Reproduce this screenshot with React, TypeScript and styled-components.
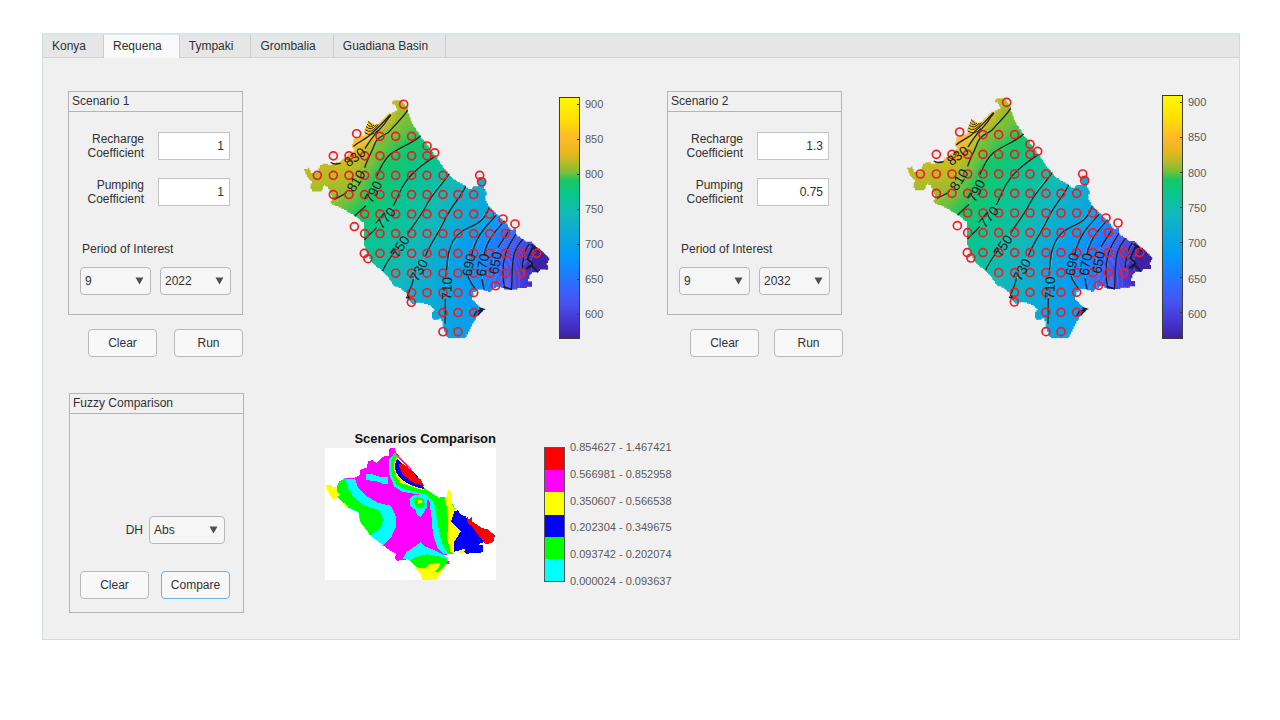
import React, { useId, useState } from "react";
import styled, { createGlobalStyle } from "styled-components";

type Point = [number, number];

/* ---------- colour scale ---------- */

const SCALE_TOP = 910;
const SCALE_BOTTOM = 565;

const ramp: [number, number, number, number][] = [
  [0, 255, 248, 0],
  [0.09, 255, 224, 0],
  [0.17, 255, 185, 42],
  [0.235, 228, 184, 28],
  [0.28, 172, 188, 40],
  [0.315, 112, 192, 60],
  [0.345, 22, 200, 100],
  [0.405, 8, 198, 142],
  [0.49, 18, 184, 188],
  [0.57, 10, 168, 220],
  [0.655, 6, 152, 248],
  [0.72, 20, 130, 255],
  [0.79, 53, 102, 255],
  [0.86, 70, 80, 240],
  [0.945, 69, 48, 200],
  [1, 62, 32, 160],
];

const colorAt = (level: number): string => {
  const t = Math.min(1, Math.max(0, (SCALE_TOP - level) / (SCALE_TOP - SCALE_BOTTOM)));
  let i = 1;
  while (i < ramp.length - 1 && ramp[i][0] < t) i += 1;
  const a = ramp[i - 1];
  const b = ramp[i];
  const k = (t - a[0]) / (b[0] - a[0]);
  const mix = (n: number) => Math.round(a[n] + (b[n] - a[n]) * k);
  return `rgb(${mix(1)},${mix(2)},${mix(3)})`;
};

/* ---------- raster helpers ---------- */

const parse = (text: string): Point[] =>
  text
    .trim()
    .split(/\s+/)
    .map((pair) => pair.split(",").map(Number) as Point);

const inside = (x: number, y: number, poly: Point[]): boolean => {
  let hit = false;
  for (let i = 0, j = poly.length - 1; i < poly.length; j = i, i += 1) {
    const [xi, yi] = poly[i];
    const [xj, yj] = poly[j];
    if (yi > y !== yj > y && x < ((xj - xi) * (y - yi)) / (yj - yi) + xi) hit = !hit;
  }
  return hit;
};

/* Path made of grid cells whose centre lies within the polygon. */
const cellPath = (poly: Point[], size: number): string => {
  const xs = poly.map((p) => p[0]);
  const ys = poly.map((p) => p[1]);
  const x0 = Math.floor(Math.min(...xs) / size) * size;
  const y0 = Math.floor(Math.min(...ys) / size) * size;
  const x1 = Math.max(...xs);
  const y1 = Math.max(...ys);
  let d = "";
  for (let y = y0; y < y1; y += size) {
    let start: number | null = null;
    for (let x = x0; x <= x1 + size; x += size) {
      const on = inside(x + size / 2, y + size / 2, poly);
      if (on && start === null) start = x;
      if (!on && start !== null) {
        d += `M${start} ${y}H${x}V${y + size}H${start}Z`;
        start = null;
      }
    }
  }
  return d;
};

/* ---------- head map data ---------- */

const basin = parse(`
302,52 302,43 315,38 330,40 347,50 348,75 352,88 360,108 372,128 386,150 398,165 412,182
428,205 440,222 452,240 468,260 480,275 492,283 505,292 520,297 522,303 535,310 545,302
560,300 557,283 563,270 577,272 581,290 577,305 583,320 581,340 592,362 608,378 622,392
636,405 650,422 662,434 668,426 674,432 673,448 690,458 705,468 722,470 740,488 755,500
774,518 764,534 769,553 745,553 737,562 725,558 712,572 708,587 720,590 720,605 690,607
660,613 635,610 620,603 600,612 592,621 586,615 560,612 545,622 540,640 552,655 565,668
574,675 560,690 548,706 538,725 528,745 520,762 470,762 462,750 455,735 452,710 445,700
430,706 418,696 420,683 427,675 415,660 400,655 380,650 360,657 350,640 343,622 325,608
305,600 292,580 272,556 255,545 240,530 228,510 218,480 218,440 215,410 190,390 165,375
140,362 115,352 122,335 113,318 108,300 95,297 90,314 65,318 55,305 60,285 45,270 37,250
50,245 60,262 78,257 85,237 100,230 115,236 140,228 165,210 190,190 180,180 186,155
205,150 222,144 235,140 250,117 270,100 290,82 305,76 315,70 312,56`);

/* Guide lines of equal level, each running from the lower left to the upper right. */
const isolines: { level: number; line: Point[] }[] = [
  { level: 875, line: parse("20,0 80,40 150,120 180,110 200,95 220,75 240,40 240,-20") },
  { level: 862, line: parse("20,60 80,120 165,165 195,148 222,134 248,108 268,72 270,-10") },
  { level: 846, line: parse("20,110 80,150 180,188 205,165 228,150 262,118 288,80 284,0") },
  { level: 826, line: parse("10,150 100,200 165,222 200,195 225,168 264,126 298,78 296,0") },
  { level: 806, line: parse("40,400 125,352 165,322 195,282 222,236 256,150 300,130 352,70") },
  { level: 791, line: parse("150,430 190,390 225,350 258,260 285,220 340,180 385,147 450,100") },
  { level: 772, line: parse("180,500 218,462 270,410 310,355 340,290 370,250 430,207 480,170") },
  { level: 754, line: parse("230,620 272,556 320,480 360,425 400,360 430,310 470,262 530,200") },
  { level: 732, line: parse("310,720 345,635 375,560 405,500 440,430 480,365 520,300 570,210") },
  { level: 710, line: parse("440,820 458,690 465,570 475,490 510,435 560,408 592,365 640,240") },
  { level: 690, line: parse("590,720 548,610 528,565 530,510 545,475 575,430 610,387 680,280") },
  { level: 670, line: parse("600,720 576,612 570,565 570,510 580,475 605,435 636,400 700,320") },
  { level: 650, line: parse("620,720 605,612 602,565 605,510 620,480 640,450 655,425 720,340") },
  { level: 630, line: parse("640,720 635,608 630,560 637,510 650,480 665,452 674,440 740,370") },
  { level: 610, line: parse("665,720 658,610 660,560 663,520 672,490 690,462 702,448 760,400") },
  { level: 595, line: parse("700,720 690,610 690,560 695,530 700,500 715,478 740,440 780,400") },
  { level: 568, line: parse("740,720 745,600 718,555 715,530 722,510 740,490 760,480 820,440") },
  { level: 560, line: parse("900,720 900,680 900,640 900,600 900,560 900,500 900,460 900,440") },
];

const STEPS = 8;

const bands = isolines.slice(0, -1).flatMap((low, i) => {
  const high = isolines[i + 1];
  const at = (k: number) =>
    low.line.map((p, n): Point => [
      p[0] + (high.line[n][0] - p[0]) * k,
      p[1] + (high.line[n][1] - p[1]) * k,
    ]);
  return Array.from({ length: STEPS }, (_, s) => {
    const edge = at(s / STEPS);
    const next = at(Math.min(1, (s + 1.3) / STEPS)).reverse();
    const level = low.level + ((high.level - low.level) * (s + 0.5)) / STEPS;
    return { fill: colorAt(level), points: [...edge, ...next].map((p) => p.join(",")).join(" ") };
  });
});

const contourLines = [
  "M184 180C202 163 226 157 240 139C258 124 276 104 295 83",
  "M219 186C232 166 240 152 252 140C262 128 276 116 286 98L297 84",
  "M116 228Q128 236 146 230",
  "M218 244C226 218 238 200 248 172C258 144 284 148 296 130C314 108 334 92 347 70",
  "M126 340C142 330 154 330 164 318",
  "M254 270C262 252 274 222 294 204C322 182 360 172 386 147",
  "M188 390L222 358",
  "M304 360C318 334 326 306 342 286C362 254 400 228 431 208",
  "M217 462C234 444 246 436 254 424",
  "M346 446C366 414 388 388 404 356C424 318 450 296 472 262",
  "M272 556C282 532 296 516 308 496",
  "M400 512C416 470 444 436 462 394C484 352 508 330 521 300",
  "M346 634C352 612 362 598 364 580",
  "M462 572C466 540 464 514 474 488C484 452 508 434 532 424C566 412 580 394 592 364",
  "M460 640L459 716",
  "M539 508C546 474 562 446 580 424L612 388",
  "M528 572C534 590 546 604 552 614",
  "M576 508C580 484 592 458 612 434L638 404",
  "M570 580L576 613",
  "M618 486C626 470 640 454 652 432",
  "M638 608C630 572 632 530 642 500C648 482 660 464 672 444",
  "M658 612C662 570 658 530 668 500C674 480 684 470 692 460",
  "M690 552C694 530 692 500 712 474",
];

const heavyLines = [
  "M716 476L748 502L724 488",
  "M722 484L706 520L722 534L702 550",
  "M706 548L720 540L738 560",
  "M346 620L352 640L342 636",
  "M545 694L552 680L574 672L562 668",
  "M556 690L572 674",
  "M634 604L660 612",
];

/* Closely spaced arcs around the local high on the north-west edge. */
const moundLines = [
  "M228 104L240 115",
  "M225 112Q235 124 246 115",
  "M222 120Q238 134 253 114",
  "M220 129Q238 144 259 113",
  "M218 138Q240 152 258 130",
];

const contourLabels: [string, number, number, number][] = [
  ["830", 188, 212, -36],
  ["810", 192, 284, -58],
  ["790", 244, 317, -62],
  ["770", 281, 396, -50],
  ["750", 324, 482, -56],
  ["730", 381, 554, -62],
  ["710", 465, 609, -88],
  ["690", 531, 538, -78],
  ["670", 572, 538, -80],
  ["650", 610, 532, -80],
];

const columns = [76, 124, 171, 218, 264, 311, 359, 405, 453, 498, 545, 593, 640, 687, 734];

const wellRows: [number, number, number][] = [
  [149, 4, 6],
  [208, 1, 7],
  [267, 0, 8],
  [325, 1, 10],
  [384, 3, 11],
  [443, 3, 12],
  [503, 4, 14],
  [563, 5, 13],
  [622, 6, 10],
  [682, 8, 10],
  [740, 8, 9],
];

const wells: Point[] = [
  ...wellRows.flatMap(([y, from, to]) => columns.slice(from, to + 1).map((x): Point => [x, y])),
  ...parse(`335,52 194,141 405,178 428,199 563,267 569,287 633,399 669,414 187,422 217,503
    228,519 611,601 358,651`),
];

const basinCells = cellPath(basin, 4);

/* ---------- comparison map data ---------- */

const comparisonAreas: [string, string][] = [
  ["#ff00ff", "222,76 226,69 238,68 243,82 258,100 275,118 300,145 325,185 345,205 370,218 388,222 392,260 405,300 418,385 385,390 340,400 262,404 248,408 240,402 243,385 225,376 205,362 165,330 155,315 135,290 130,262 92,244 80,222 66,215 66,185 72,170 90,160 120,158 134,150 135,135 155,128 160,108 172,106 185,114 205,95 222,92"],
  ["#00ffff", "86,160 120,162 128,185 150,210 190,234 228,242 243,275 243,305 228,338 205,362 165,330 155,315 135,290 130,262 92,244 80,222"],
  ["#00ff00", "66,185 72,170 92,160 97,185 115,217 150,243 190,255 204,282 196,308 165,332 155,315 135,290 133,262 92,244 68,215"],
  ["#ffff00", "33,180 45,178 56,188 66,184 66,200 74,208 66,218 54,224 44,208 34,190"],
  ["#ffff00", "80,230 90,236 100,246 90,246"],
  ["#00ffff", "154,148 170,147 192,155 220,156 220,178 204,178 190,170 154,165"],
  ["#00ffff", "240,82 222,105 223,150 238,185 262,200 320,210 343,228 350,280 354,330 368,370 388,388 418,388 420,250 405,225 370,218 325,188 243,88"],
  ["#00ff00", "238,84 228,108 230,150 246,182 270,193 336,210 357,232 366,280 374,330 384,362 402,388 418,388 420,250 405,225 388,216 370,218 325,188 243,88"],
  ["#ffff00", "244,94 236,118 240,150 256,174 296,187 328,197 325,186 300,145 250,100"],
  ["#0000ff", "246,100 240,118 242,140 258,162 286,180 328,193 320,170 300,145 252,108"],
  ["#ff0000", "250,116 266,118 290,136 306,158 318,164 326,182 304,177 284,166 262,146"],
  ["#ffff00", "397,214 398,197 404,192 410,210 408,230 420,256 410,290 436,318 418,350 418,388 406,380 396,340 400,290 394,240 388,222"],
  ["#0000ff", "418,258 430,256 436,268 452,274 470,300 500,330 510,350 490,358 505,362 505,382 455,386 440,374 418,380 418,350 438,318 408,290"],
  ["#ff0000", "454,268 462,284 470,276 472,290 500,308 520,314 540,332 534,352 512,358 494,336 474,308 458,294"],
  ["#00ffff", "283,222 292,212 318,210 335,220 336,246 326,262 318,276 306,270 302,256 286,244"],
  ["#00ff00", "294,222 306,216 326,222 330,240 318,250 304,246"],
  ["#ffff00", "308,226 320,226 320,234 308,236"],
  ["#00ffff", "262,402 276,380 300,364 316,352 330,364 350,372 386,390 398,400 396,412 300,412 284,404"],
  ["#00ff00", "286,406 306,394 336,388 372,394 396,402 398,412 372,430 320,432 302,424"],
  ["#ffff00", "300,430 330,430 344,418 376,412 372,428 390,424 376,446 364,464 322,466 316,444 304,436"],
  ["#00ff00", "360,440 394,408 396,416 368,444"],
  ["#ffff00", "430,384 442,372 454,374 438,386"],
  ["#ff00ff", "396,408 402,408 402,416 396,416"],
];

const comparisonCells = comparisonAreas.map(([fill, text]) => ({ fill, d: cellPath(parse(text), 3) }));

const comparisonClasses = [
  { color: "#ff0000", range: "0.854627 - 1.467421" },
  { color: "#ff00ff", range: "0.566981 - 0.852958" },
  { color: "#ffff00", range: "0.350607 - 0.566538" },
  { color: "#0000ff", range: "0.202304 - 0.349675" },
  { color: "#00ff00", range: "0.093742 - 0.202074" },
  { color: "#00ffff", range: "0.000024 - 0.093637" },
];

/* ---------- styles ---------- */

const GlobalStyle = createGlobalStyle`
  *, *::before, *::after { box-sizing: border-box; }
  body {
    margin: 0;
    background: #ffffff;
    color: #303030;
    font-family: "Liberation Sans", Arial, sans-serif;
    font-size: 12px;
    line-height: 14px;
  }
  button, input, select { font: inherit; color: inherit; }
`;

const Window = styled.main`
  margin: 33px 40px 80px 42px;
  min-width: 1190px;
  background: #f0f0f0;
  border: 1px solid #d4dada;
  border-top: 2px solid #d3e6ea;
`;

const TabBar = styled.div`
  display: flex;
  height: 23px;
  background: #e6e6e6;
  border-bottom: 1px solid #d2d2d2;
`;

const Tab = styled.button<{ $active: boolean }>`
  height: ${(p) => (p.$active ? 23 : 22)}px;
  padding: 0 17px ${(p) => (p.$active ? 1 : 0)}px 9px;
  border: 0;
  border-right: 1px solid #cccccc;
  background: ${(p) => (p.$active ? "#f9f9f9" : "transparent")};
`;

const Body = styled.div`
  padding: 33px 0 26px;
`;

const Scenarios = styled.div`
  display: grid;
  grid-template-columns: 1fr 1fr;
  gap: 2px;
`;

const ScenarioArea = styled.section`
  display: flex;
  align-items: flex-start;
  padding-left: 25px;
`;

const ControlColumn = styled.div`
  flex: none;
  width: 175px;
`;

const Panel = styled.fieldset`
  width: 175px;
  min-width: 0;
  margin: 0;
  padding: 0;
  border: 1px solid #b4b4b4;
`;

const PanelTitle = styled.h2`
  margin: 0;
  height: 20px;
  padding: 1px 3px;
  border-bottom: 1px solid #b4b4b4;
  font-size: 12px;
  line-height: 16px;
  font-weight: 400;
`;

const ScenarioForm = styled.div`
  display: flex;
  flex-direction: column;
  padding: 20px 0 19px;
`;

const Field = styled.label`
  display: flex;
  align-items: center;
  gap: 14px;
  margin-bottom: 18px;
`;

const FieldName = styled.span`
  width: 75px;
  padding-left: 16px;
  text-align: right;
`;

const NumberInput = styled.input`
  width: 72px;
  height: 28px;
  padding: 0 5px;
  border: 1px solid #c4c4c4;
  background: #ffffff;
  text-align: right;
`;

const PeriodTitle = styled.h3`
  margin: 18px 0 11px 13px;
  font-size: 12px;
  line-height: 14px;
  font-weight: 400;
`;

const PeriodRow = styled.div`
  display: flex;
  gap: 9px;
  padding-left: 11px;
`;

const SelectBox = styled.span<{ $width: number }>`
  position: relative;
  display: block;
  width: ${(p) => p.$width}px;
`;

const StyledSelect = styled.select`
  appearance: none;
  display: block;
  width: 100%;
  height: 28px;
  padding: 0 24px 0 4px;
  border: 1px solid #b8b8b8;
  border-radius: 4px;
  background: #f6f6f6;
`;

const Arrow = styled.svg`
  position: absolute;
  top: 10px;
  right: 7px;
  pointer-events: none;
`;

const ButtonRow = styled.div<{ $gap: number }>`
  display: flex;
  gap: ${(p) => p.$gap}px;
`;

const ScenarioButtons = styled(ButtonRow)<{ $indent: number }>`
  padding: 14px 0 0 ${(p) => p.$indent}px;
`;

const Button = styled.button<{ $focus?: boolean }>`
  flex: none;
  width: 69px;
  height: 28px;
  padding: 0 0 1px;
  border: 1px solid ${(p) => (p.$focus ? "#6fb2e0" : "#b8b8b8")};
  border-radius: 4px;
  background: #f8f8f8;
`;

const Plot = styled.div<{ $top: number; $left: number }>`
  display: flex;
  align-items: flex-start;
  gap: 7px;
  margin: ${(p) => p.$top}px 0 0 ${(p) => p.$left}px;
`;

const ScaleGroup = styled.div`
  display: flex;
  gap: 5px;
  margin-top: 2px;
`;

const ScaleLabels = styled.div<{ $height: number }>`
  display: flex;
  flex-direction: column;
  justify-content: space-between;
  height: ${(p) => p.$height}px;
  color: #5a5a5a;
  font-size: 11px;
  line-height: 14px;
  white-space: nowrap;
`;

const Comparison = styled.section`
  display: flex;
  align-items: flex-start;
  padding: 36px 0 0 26px;
`;

const ComparisonForm = styled.div`
  padding: 102px 10px 13px;
`;

const MeasureRow = styled.label`
  display: flex;
  align-items: center;
  justify-content: flex-end;
  gap: 6px;
  margin: 0 8px 27px 0;
`;

const Figure = styled.figure`
  display: flex;
  flex-direction: column;
  align-items: flex-end;
  gap: 1px;
  width: 171px;
  margin: 37px 0 0 81px;
`;

const FigureTitle = styled.figcaption`
  color: #111111;
  font-size: 13px;
  line-height: 17px;
  font-weight: 700;
  white-space: nowrap;
`;

const Legend = styled.div`
  display: flex;
  gap: 5px;
  margin: 47px 0 0 48px;
`;

const Swatches = styled.div`
  display: flex;
  flex-direction: column;
  width: 21px;
  height: 135px;
  margin-top: 7px;
  border: 1px solid #555555;
`;

const Swatch = styled.span<{ $color: string }>`
  flex: 1;
  background: ${(p) => p.$color};
`;

/* ---------- components ---------- */

function Dropdown({
  label,
  options,
  initial,
  width,
}: {
  label: string;
  options: string[];
  initial: string;
  width: number;
}) {
  const [value, setValue] = useState(initial);
  return (
    <SelectBox $width={width}>
      <StyledSelect aria-label={label} value={value} onChange={(e) => setValue(e.target.value)}>
        {options.map((option) => (
          <option key={option}>{option}</option>
        ))}
      </StyledSelect>
      <Arrow width="9" height="8" viewBox="0 0 9 8" aria-hidden="true">
        <path d="M0.5 0.5H8.5L4.5 7.5Z" fill="#505050" />
      </Arrow>
    </SelectBox>
  );
}

function HeadMap({ height }: { height: number }) {
  const clip = useId();
  return (
    <svg
      width="252"
      height={height}
      viewBox="24 24 756 744"
      preserveAspectRatio="none"
      role="img"
      aria-label="Hydraulic head"
    >
      <clipPath id={clip}>
        <path d={basinCells} />
      </clipPath>
      <g clipPath={`url(#${clip})`}>
        {bands.map((band, i) => (
          <polygon key={i} points={band.points} fill={band.fill} />
        ))}
      </g>
      <path d="M230 102L250 114L262 112L252 138L222 148L216 134Z" fill="#f2c32c" />
      <g fill="none" stroke="#16281c" strokeWidth="4">
        {contourLines.map((d) => (
          <path key={d} d={d} />
        ))}
      </g>
      <g fill="none" stroke="#2a2a14" strokeWidth="3">
        {moundLines.map((d) => (
          <path key={d} d={d} />
        ))}
      </g>
      <g fill="none" stroke="#141c30" strokeWidth="5">
        {heavyLines.map((d) => (
          <path key={d} d={d} />
        ))}
      </g>
      <g fill="none" stroke="#ee1c24" strokeWidth="5">
        {wells.map(([x, y]) => (
          <circle key={`${x}-${y}`} cx={x} cy={y} r="12" />
        ))}
      </g>
      <g
        fill="#10241f"
        fontFamily="'Liberation Sans', Arial, sans-serif"
        fontSize="41"
        textAnchor="middle"
      >
        {contourLabels.map(([text, x, y, angle]) => (
          <text key={text} transform={`translate(${x} ${y}) rotate(${angle})`} y="14">
            {text}
          </text>
        ))}
      </g>
    </svg>
  );
}

function ColorScale({ height }: { height: number }) {
  const gradient = useId();
  const ticks = [900, 850, 800, 750, 700, 650, 600];
  return (
    <ScaleGroup>
      <svg width="21" height={height} aria-hidden="true">
        <linearGradient id={gradient} x1="0" y1="0" x2="0" y2="1">
          {ramp.map(([offset, r, g, b]) => (
            <stop key={offset} offset={offset} stopColor={`rgb(${r},${g},${b})`} />
          ))}
        </linearGradient>
        <rect
          x="0.5"
          y="0.5"
          width="20"
          height={height - 1}
          fill={`url(#${gradient})`}
          stroke="#3c3c30"
        />
        {ticks.map((tick, i) => (
          <path key={tick} d={`M18 ${7.5 + i * 35}h3`} stroke="#3c3c30" />
        ))}
      </svg>
      <ScaleLabels $height={height - 18}>
        {ticks.map((tick) => (
          <span key={tick}>{tick}</span>
        ))}
      </ScaleLabels>
    </ScaleGroup>
  );
}

interface ScenarioProps {
  title: string;
  recharge: string;
  pumping: string;
  year: string;
  buttonIndent: number;
  buttonGap: number;
  plotTop: number;
  plotLeft: number;
  mapHeight: number;
}

const months = Array.from({ length: 12 }, (_, i) => String(i + 1));
const years = Array.from({ length: 21 }, (_, i) => String(2020 + i));

function Scenario({
  title,
  recharge,
  pumping,
  year,
  buttonIndent,
  buttonGap,
  plotTop,
  plotLeft,
  mapHeight,
}: ScenarioProps) {
  return (
    <ScenarioArea>
      <ControlColumn>
        <Panel aria-label={title}>
          <PanelTitle>{title}</PanelTitle>
          <ScenarioForm>
            <Field>
              <FieldName>Recharge Coefficient</FieldName>
              <NumberInput defaultValue={recharge} inputMode="decimal" />
            </Field>
            <Field>
              <FieldName>Pumping Coefficient</FieldName>
              <NumberInput defaultValue={pumping} inputMode="decimal" />
            </Field>
            <PeriodTitle>Period of Interest</PeriodTitle>
            <PeriodRow>
              <Dropdown label="Month" options={months} initial="9" width={71} />
              <Dropdown label="Year" options={years} initial={year} width={71} />
            </PeriodRow>
          </ScenarioForm>
        </Panel>
        <ScenarioButtons $gap={buttonGap} $indent={buttonIndent}>
          <Button type="button">Clear</Button>
          <Button type="button">Run</Button>
        </ScenarioButtons>
      </ControlColumn>
      <Plot $top={plotTop} $left={plotLeft}>
        <HeadMap height={mapHeight} />
        <ColorScale height={mapHeight - 4} />
      </Plot>
    </ScenarioArea>
  );
}

const tabs = ["Konya", "Requena", "Tympaki", "Grombalia", "Guadiana Basin"];

export default function App() {
  const [active, setActive] = useState("Requena");
  return (
    <>
      <GlobalStyle />
      <Window>
        <TabBar role="tablist">
          {tabs.map((tab) => (
            <Tab
              key={tab}
              type="button"
              role="tab"
              aria-selected={tab === active}
              $active={tab === active}
              onClick={() => setActive(tab)}
            >
              {tab}
            </Tab>
          ))}
        </TabBar>
        <Body>
          <Scenarios>
            <Scenario
              title="Scenario 1"
              recharge="1"
              pumping="1"
              year="2022"
              buttonIndent={20}
              buttonGap={17}
              plotTop={4}
              plotLeft={57}
              mapHeight={246}
            />
            <Scenario
              title="Scenario 2"
              recharge="1.3"
              pumping="0.75"
              year="2032"
              buttonIndent={23}
              buttonGap={15}
              plotTop={2}
              plotLeft={61}
              mapHeight={248}
            />
          </Scenarios>
          <Comparison>
            <Panel aria-label="Fuzzy Comparison">
              <PanelTitle>Fuzzy Comparison</PanelTitle>
              <ComparisonForm>
                <MeasureRow>
                  DH
                  <Dropdown label="DH" options={["Abs", "Rel"]} initial="Abs" width={76} />
                </MeasureRow>
                <ButtonRow $gap={12}>
                  <Button type="button">Clear</Button>
                  <Button type="button" $focus>
                    Compare
                  </Button>
                </ButtonRow>
              </ComparisonForm>
            </Panel>
            <Figure>
              <FigureTitle>Scenarios Comparison</FigureTitle>
              <svg width="171" height="132" viewBox="29 69 513 396" role="img" aria-label="Scenarios Comparison">
                <rect x="29" y="69" width="513" height="396" fill="#ffffff" />
                {comparisonCells.map((area, i) => (
                  <path key={i} d={area.d} fill={area.fill} shapeRendering="crispEdges" />
                ))}
              </svg>
            </Figure>
            <Legend>
              <Swatches>
                {comparisonClasses.map((item) => (
                  <Swatch key={item.color} $color={item.color} />
                ))}
              </Swatches>
              <ScaleLabels $height={148}>
                {comparisonClasses.map((item) => (
                  <span key={item.range}>{item.range}</span>
                ))}
              </ScaleLabels>
            </Legend>
          </Comparison>
        </Body>
      </Window>
    </>
  );
}
